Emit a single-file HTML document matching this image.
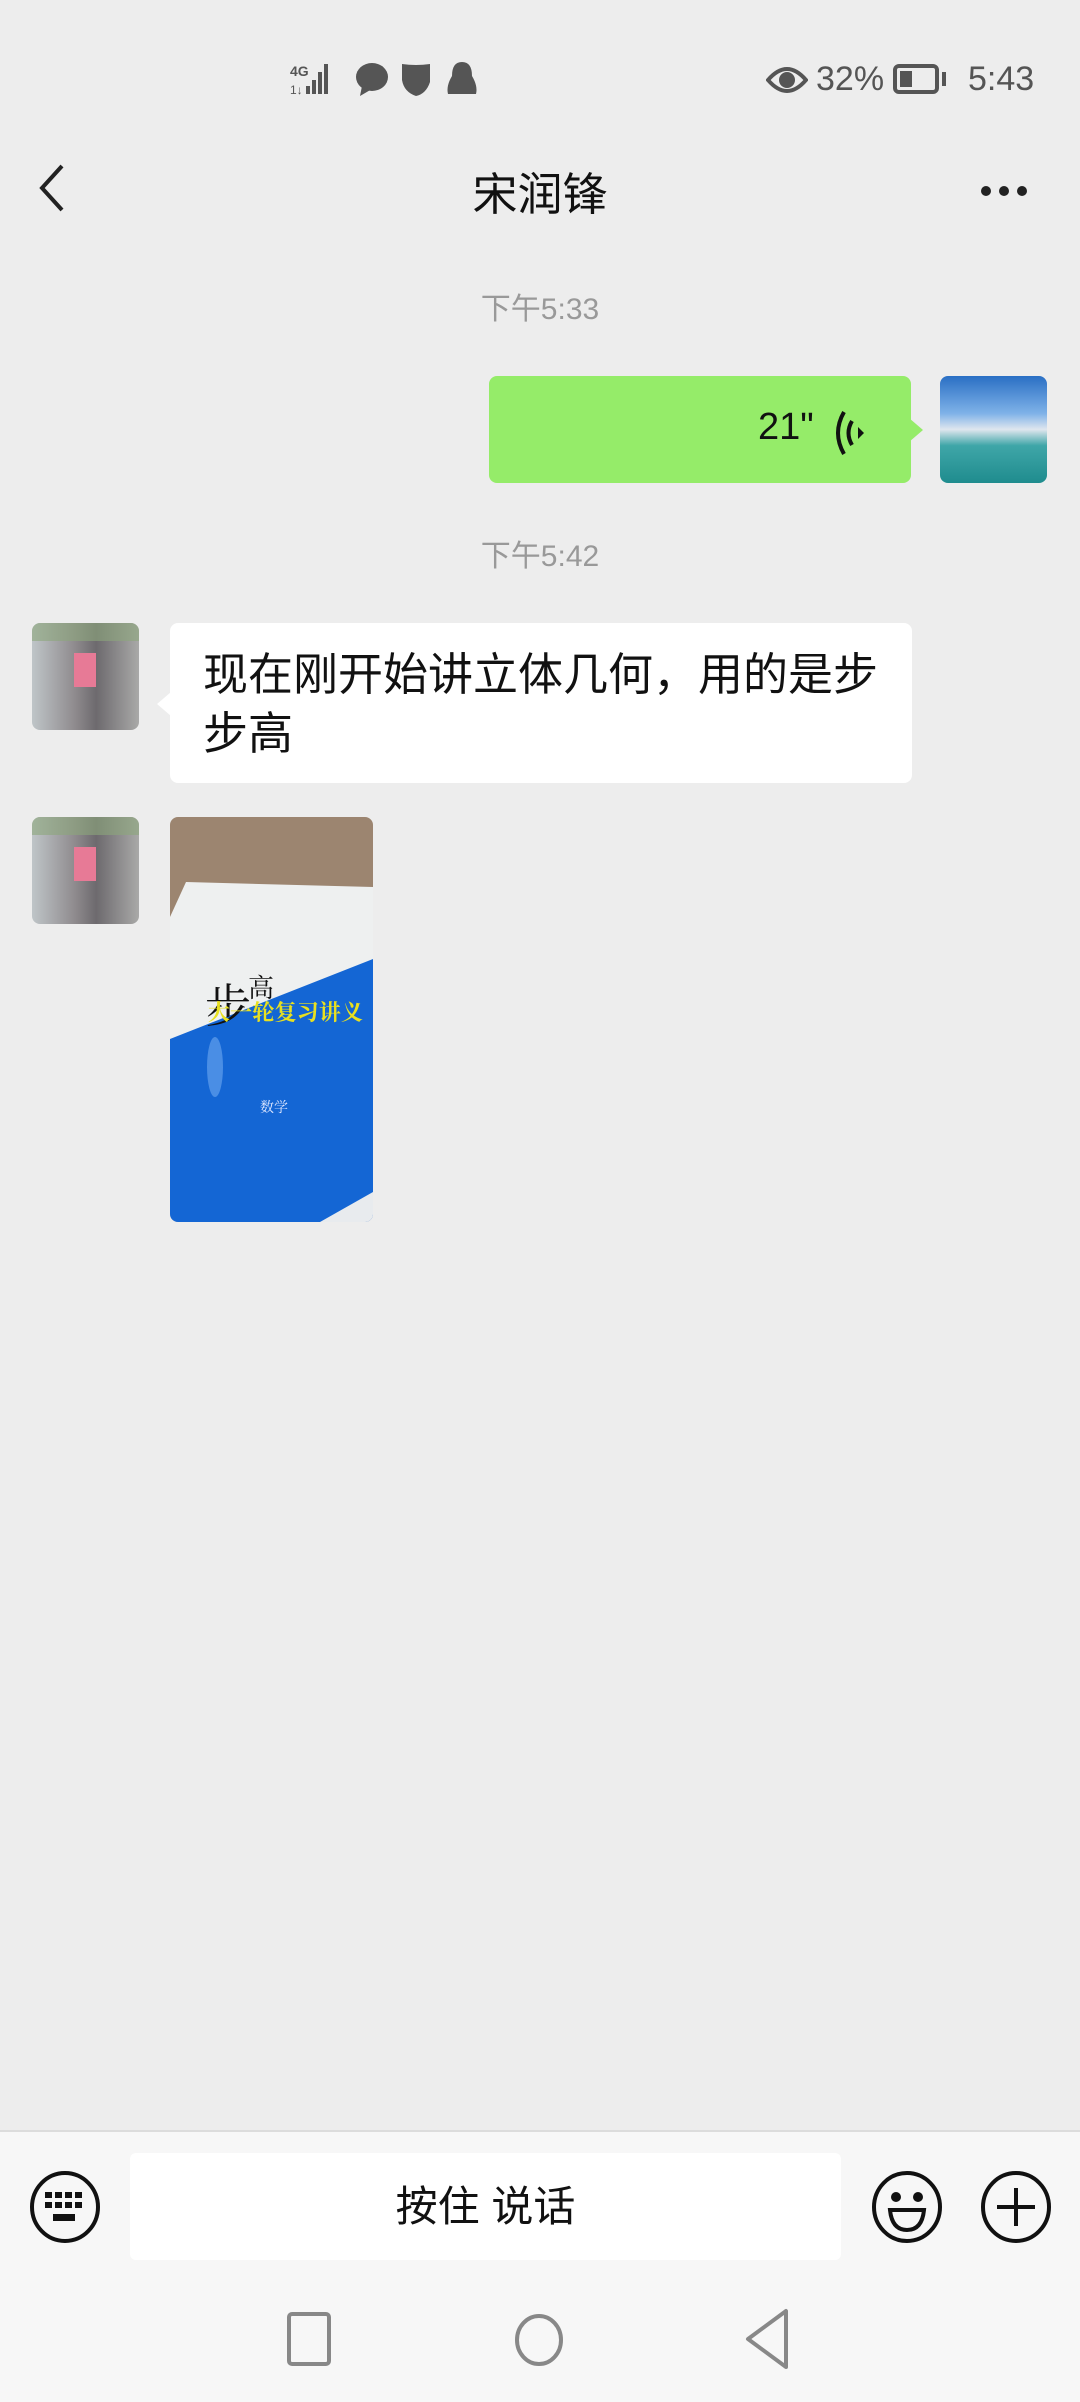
<!DOCTYPE html>
<html><head><meta charset="utf-8">
<style>
body{margin:0;width:1080px;height:2400px;background:#ededed;position:relative;overflow:hidden;font-family:"Liberation Sans","Noto Sans CJK SC",sans-serif;}
.a{position:absolute;}
.sb{color:#555;font-size:34px;}
.ts{color:#999;font-size:30px;width:1080px;text-align:center;left:0;}
.av{border-radius:8px;overflow:hidden;width:107px;height:107px;}
</style></head><body>
<!-- status bar -->
<div class="a" style="left:290px;top:60px;width:200px;height:40px;">
<svg width="200" height="40" viewBox="0 0 200 40">
<text x="0" y="16" font-size="14" font-weight="bold" fill="#555" font-family="Liberation Sans">4G</text>
<text x="0" y="34" font-size="12" fill="#555" font-family="Liberation Sans">1↓</text>
<rect x="16" y="26" width="4" height="8" fill="#555"/><rect x="22" y="20" width="4" height="14" fill="#555"/><rect x="28" y="12" width="4" height="22" fill="#555"/><rect x="34" y="4" width="4" height="30" fill="#555"/>
<ellipse cx="82" cy="17" rx="16" ry="14" fill="#555"/><path d="M72 26 L70 36 L82 29 Z" fill="#555"/>
<path d="M112 4 Q126 6 140 4 L140 22 Q136 34 126 36 Q114 32 112 20 Z" fill="#555"/>
<path d="M172 2 Q182 2 182 16 Q188 26 186 34 L158 34 Q156 26 162 16 Q162 2 172 2Z" fill="#555"/>
</svg></div>
<div class="a" style="left:766px;top:62px;"><svg width="42" height="36" viewBox="0 0 42 36"><path d="M2 18 Q21 -4 40 18 Q21 40 2 18Z" fill="none" stroke="#555" stroke-width="4"/><circle cx="21" cy="18" r="8" fill="#555"/></svg></div>
<div class="a sb" style="left:816px;top:60px;">32%</div>
<div class="a" style="left:893px;top:64px;width:46px;height:30px;border:4px solid #555;border-radius:6px;box-sizing:border-box;"><div style="position:absolute;left:3px;top:3px;width:12px;height:16px;background:#555;"></div></div>
<div class="a" style="left:942px;top:72px;width:4px;height:14px;background:#555;"></div>
<div class="a sb" style="left:968px;top:60px;">5:43</div>
<!-- nav -->
<svg class="a" style="left:36px;top:164px" width="34" height="48" viewBox="0 0 34 48"><path d="M26 2 L6 24 L26 46" fill="none" stroke="#222" stroke-width="4"/></svg>
<div class="a" style="left:0;width:1080px;text-align:center;top:158px;font-size:45px;color:#111;">宋润锋</div>
<div class="a" style="left:980px;top:184px;"><svg width="50" height="12"><circle cx="6" cy="6" r="5" fill="#222"/><circle cx="24" cy="6" r="5" fill="#222"/><circle cx="42" cy="6" r="5" fill="#222"/></svg></div>
<!-- messages -->
<div class="a ts" style="top:284px;">下午5:33</div>
<div class="a" style="left:489px;top:376px;width:422px;height:107px;background:#95ec69;border-radius:8px;"></div>
<div class="a" style="left:909px;top:418px;width:0;height:0;border-left:14px solid #95ec69;border-top:12px solid transparent;border-bottom:12px solid transparent;"></div>
<div class="a" style="left:758px;top:406px;font-size:38px;color:#111;">21"</div>
<svg class="a" style="left:830px;top:408px" width="40" height="50" viewBox="0 0 40 50"><path d="M14 4 Q2 25 14 46" fill="none" stroke="#111" stroke-width="4"/><path d="M22 13 Q15 25 22 37" fill="none" stroke="#111" stroke-width="4"/><path d="M28 19 L34 25 L28 31Z" fill="#111"/></svg>
<div class="a av" style="left:940px;top:376px;background:linear-gradient(#2a6fc4 0%,#7fb2e8 35%,#dfe6ee 50%,#3fa6a8 65%,#1f8c8e 100%);"></div>
<div class="a ts" style="top:531px;">下午5:42</div>
<div class="a av" style="left:32px;top:623px;background:linear-gradient(90deg,#bfc5c8 0%,#8f8b8e 40%,#6d6a6e 60%,#a9a9a8 100%);"><div style="position:absolute;left:42px;top:30px;width:22px;height:34px;background:#e77a96;"></div><div style="position:absolute;left:0;top:0;width:107px;height:18px;background:#8ca77c;opacity:.6"></div></div>
<div class="a" style="left:170px;top:623px;width:742px;height:160px;background:#fff;border-radius:8px;"></div>
<div class="a" style="left:157px;top:692px;width:0;height:0;border-right:14px solid #fff;border-top:12px solid transparent;border-bottom:12px solid transparent;"></div>
<div class="a" style="left:203px;top:645px;width:690px;font-size:45px;line-height:59px;color:#111;">现在刚开始讲立体几何，用的是步步高</div>
<div class="a av" style="left:32px;top:817px;background:linear-gradient(90deg,#bfc5c8 0%,#8f8b8e 40%,#6d6a6e 60%,#a9a9a8 100%);"><div style="position:absolute;left:42px;top:30px;width:22px;height:34px;background:#e77a96;"></div><div style="position:absolute;left:0;top:0;width:107px;height:18px;background:#8ca77c;opacity:.6"></div></div>
<div class="a" style="left:170px;top:817px;width:203px;height:405px;border-radius:8px;overflow:hidden;background:#9c8570;">
<svg width="203" height="405" viewBox="0 0 203 405">
<path d="M16 65 L203 70 L203 405 L0 405 L0 100Z" fill="#eef0f0"/>
<path d="M0 222 L203 142 L203 405 L0 405Z" fill="#1466d4"/>
<path d="M150 405 L203 375 L203 405Z" fill="#e8ebee"/>
<ellipse cx="45" cy="250" rx="8" ry="30" fill="#6ea8f0" opacity=".6"/>
<text x="35" y="205" font-size="46" font-family="Noto Serif CJK SC,serif" fill="#111">步</text>
<text x="78" y="180" font-size="26" font-family="Noto Serif CJK SC,serif" fill="#111">高</text>
<text x="38" y="203" font-size="22" font-family="Noto Serif CJK SC,serif" fill="#e8e020" font-weight="bold" textLength="155">大一轮复习讲义</text>
<text x="90" y="295" font-size="14" font-family="Noto Serif CJK SC,serif" fill="#dfe8ff">数学</text>
</svg></div>
<!-- bottom bar -->
<div class="a" style="left:0;top:2130px;width:1080px;height:270px;background:#f7f7f7;border-top:2px solid #dcdcdc;"></div>
<div class="a" style="left:130px;top:2153px;width:711px;height:107px;background:#fff;border-radius:6px;text-align:center;line-height:107px;font-size:42px;color:#111;">按住 说话</div>
<svg class="a" style="left:28px;top:2170px" width="74" height="74" viewBox="0 0 74 74"><ellipse cx="37" cy="37" rx="33" ry="34" fill="none" stroke="#111" stroke-width="4"/>
<g fill="#111"><rect x="17" y="22" width="7" height="6"/><rect x="27" y="22" width="7" height="6"/><rect x="37" y="22" width="7" height="6"/><rect x="47" y="22" width="7" height="6"/><rect x="17" y="32" width="7" height="6"/><rect x="27" y="32" width="7" height="6"/><rect x="37" y="32" width="7" height="6"/><rect x="47" y="32" width="7" height="6"/><rect x="25" y="44" width="22" height="7"/></g></svg>
<svg class="a" style="left:870px;top:2170px" width="74" height="74" viewBox="0 0 74 74"><ellipse cx="37" cy="37" rx="33" ry="34" fill="none" stroke="#111" stroke-width="4"/><circle cx="26" cy="27" r="5" fill="#111"/><circle cx="48" cy="27" r="5" fill="#111"/><path d="M20 40 L54 40 Q52 60 37 60 Q22 60 20 40Z" fill="none" stroke="#111" stroke-width="4"/></svg>
<svg class="a" style="left:979px;top:2170px" width="74" height="74" viewBox="0 0 74 74"><ellipse cx="37" cy="37" rx="33" ry="34" fill="none" stroke="#111" stroke-width="4"/><path d="M37 18 V56 M18 37 H56" stroke="#111" stroke-width="4"/></svg>
<!-- nav buttons -->
<svg class="a" style="left:286px;top:2310px" width="48" height="60"><rect x="3" y="4" width="40" height="50" rx="3" fill="none" stroke="#888" stroke-width="4"/></svg>
<svg class="a" style="left:513px;top:2303px" width="52" height="74"><ellipse cx="26" cy="37" rx="22" ry="24" fill="none" stroke="#888" stroke-width="4"/></svg>
<svg class="a" style="left:744px;top:2303px" width="50" height="74"><path d="M42 8 L42 64 L4 36Z" fill="none" stroke="#888" stroke-width="4" stroke-linejoin="round"/></svg>
</body></html>
